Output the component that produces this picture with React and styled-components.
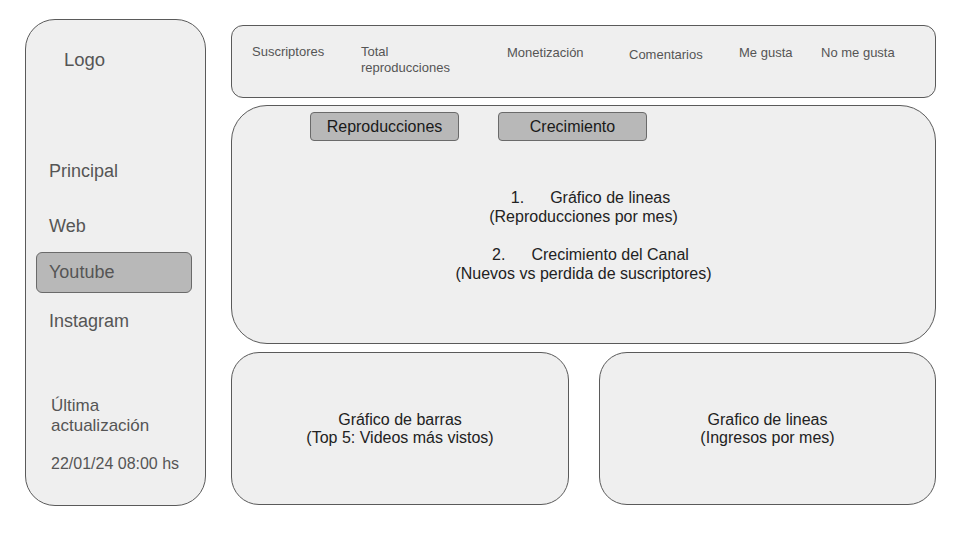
import styled, { createGlobalStyle } from "styled-components";

const GlobalStyle = createGlobalStyle`
  * { box-sizing: border-box; }
  body {
    margin: 0;
    background: #ffffff;
    font-family: "Liberation Sans", Arial, sans-serif;
  }
`;

const Page = styled.div`
  width: 960px;
  height: 540px;
  padding: 19px 0 0 25px;
  display: flex;
  gap: 25px;
`;

const Sidebar = styled.aside`
  width: 181px;
  height: 487px;
  background: #efefef;
  border: 1px solid #5a5a5a;
  border-radius: 30px;
  padding: 0 13px 0 10px;
  display: flex;
  flex-direction: column;
  color: #555555;
`;

const Logo = styled.div`
  font-size: 18.5px;
  line-height: 22px;
  margin: 29px 0 0 28px;
`;

const NavList = styled.nav`
  display: flex;
  flex-direction: column;
  margin-top: 80px;
`;

const NavItem = styled.div`
  height: 41px;
  margin-top: ${({ $mt }) => $mt || 0}px;
  padding: 0 12px;
  display: flex;
  align-items: center;
  font-size: 18px;
  border-radius: 6px;
  border: 1px solid ${({ $active }) => ($active ? "#6a6a6a" : "transparent")};
  background: ${({ $active }) => ($active ? "#b8b8b8" : "transparent")};
`;

const Updated = styled.div`
  margin: 54px 0 0 15px;
  font-size: 17px;
  line-height: 20px;
`;

const UpdatedDate = styled.div`
  margin: 18px 0 0 15px;
  font-size: 16px;
  line-height: 20px;
`;

const Content = styled.main`
  width: 705px;
  margin-top: 6px;
  display: flex;
  flex-direction: column;
`;

const StatsBar = styled.header`
  height: 73px;
  background: #efefef;
  border: 1px solid #5a5a5a;
  border-radius: 12px;
  padding: 18px 0 0 20px;
  display: grid;
  grid-template-columns: 109px 146px 122px 110px 82px auto;
  align-items: start;
  font-size: 13px;
  line-height: 16px;
  color: #555555;
`;

const Stat = styled.div`
  margin-top: ${({ $drop }) => $drop || 0}px;
`;

const MainPanel = styled.section`
  height: 239px;
  margin-top: 7px;
  background: #efefef;
  border: 1px solid #5a5a5a;
  border-radius: 36px;
  padding: 6px 0 0 78px;
  display: flex;
  flex-direction: column;
`;

const Tabs = styled.div`
  display: flex;
  gap: 39px;
`;

const Tab = styled.button`
  width: 149px;
  height: 29px;
  padding: 0;
  background: #b8b8b8;
  border: 1px solid #6a6a6a;
  border-radius: 4px;
  font-family: inherit;
  font-size: 16px;
  color: #1a1a1a;
`;

const Description = styled.div`
  margin: 47px 0 0 -78px;
  display: flex;
  flex-direction: column;
  align-items: center;
  gap: 19px;
  font-size: 16px;
  line-height: 19px;
  color: #222222;
  text-align: center;
`;

const Item = styled.div`
  display: flex;
  flex-direction: column;
  align-items: center;
`;

const ItemTitle = styled.div`
  padding-left: 14px;
`;

const Num = styled.span`
  margin-right: 26px;
`;

const Cards = styled.div`
  margin-top: 8px;
  display: grid;
  grid-template-columns: 338px 337px;
  gap: 30px;
`;

const Card = styled.section`
  height: 153px;
  background: #efefef;
  border: 1px solid #5a5a5a;
  border-radius: 28px;
  display: flex;
  align-items: center;
  justify-content: center;
  text-align: center;
  font-size: 16px;
  line-height: 18px;
  color: #222222;
`;

const stats = [
  { label: "Suscriptores" },
  { label: <>Total<br />reproducciones</> },
  { label: "Monetización", drop: 1 },
  { label: "Comentarios", drop: 3 },
  { label: "Me gusta", drop: 1 },
  { label: "No me gusta", drop: 1 },
];

const nav = [
  { label: "Principal", mt: 0 },
  { label: "Web", mt: 14 },
  { label: "Youtube", mt: 5, active: true },
  { label: "Instagram", mt: 8 },
];

export default function App() {
  return (
    <>
      <GlobalStyle />
      <Page>
        <Sidebar>
          <Logo>Logo</Logo>
          <NavList>
            {nav.map((n) => (
              <NavItem key={n.label} $mt={n.mt} $active={n.active}>
                {n.label}
              </NavItem>
            ))}
          </NavList>
          <Updated>
            Última
            <br />
            actualización
          </Updated>
          <UpdatedDate>22/01/24 08:00 hs</UpdatedDate>
        </Sidebar>

        <Content>
          <StatsBar>
            {stats.map((s, i) => (
              <Stat key={i} $drop={s.drop}>
                {s.label}
              </Stat>
            ))}
          </StatsBar>

          <MainPanel>
            <Tabs>
              <Tab>Reproducciones</Tab>
              <Tab>Crecimiento</Tab>
            </Tabs>
            <Description>
              <Item>
                <ItemTitle>
                  <Num>1.</Num>Gráfico de lineas
                </ItemTitle>
                <div>(Reproducciones por mes)</div>
              </Item>
              <Item>
                <ItemTitle>
                  <Num>2.</Num>Crecimiento del Canal
                </ItemTitle>
                <div>(Nuevos vs perdida de suscriptores)</div>
              </Item>
            </Description>
          </MainPanel>

          <Cards>
            <Card>
              <div>
                Gráfico de barras
                <br />
                (Top 5: Videos más vistos)
              </div>
            </Card>
            <Card>
              <div>
                Grafico de lineas
                <br />
                (Ingresos por mes)
              </div>
            </Card>
          </Cards>
        </Content>
      </Page>
    </>
  );
}
